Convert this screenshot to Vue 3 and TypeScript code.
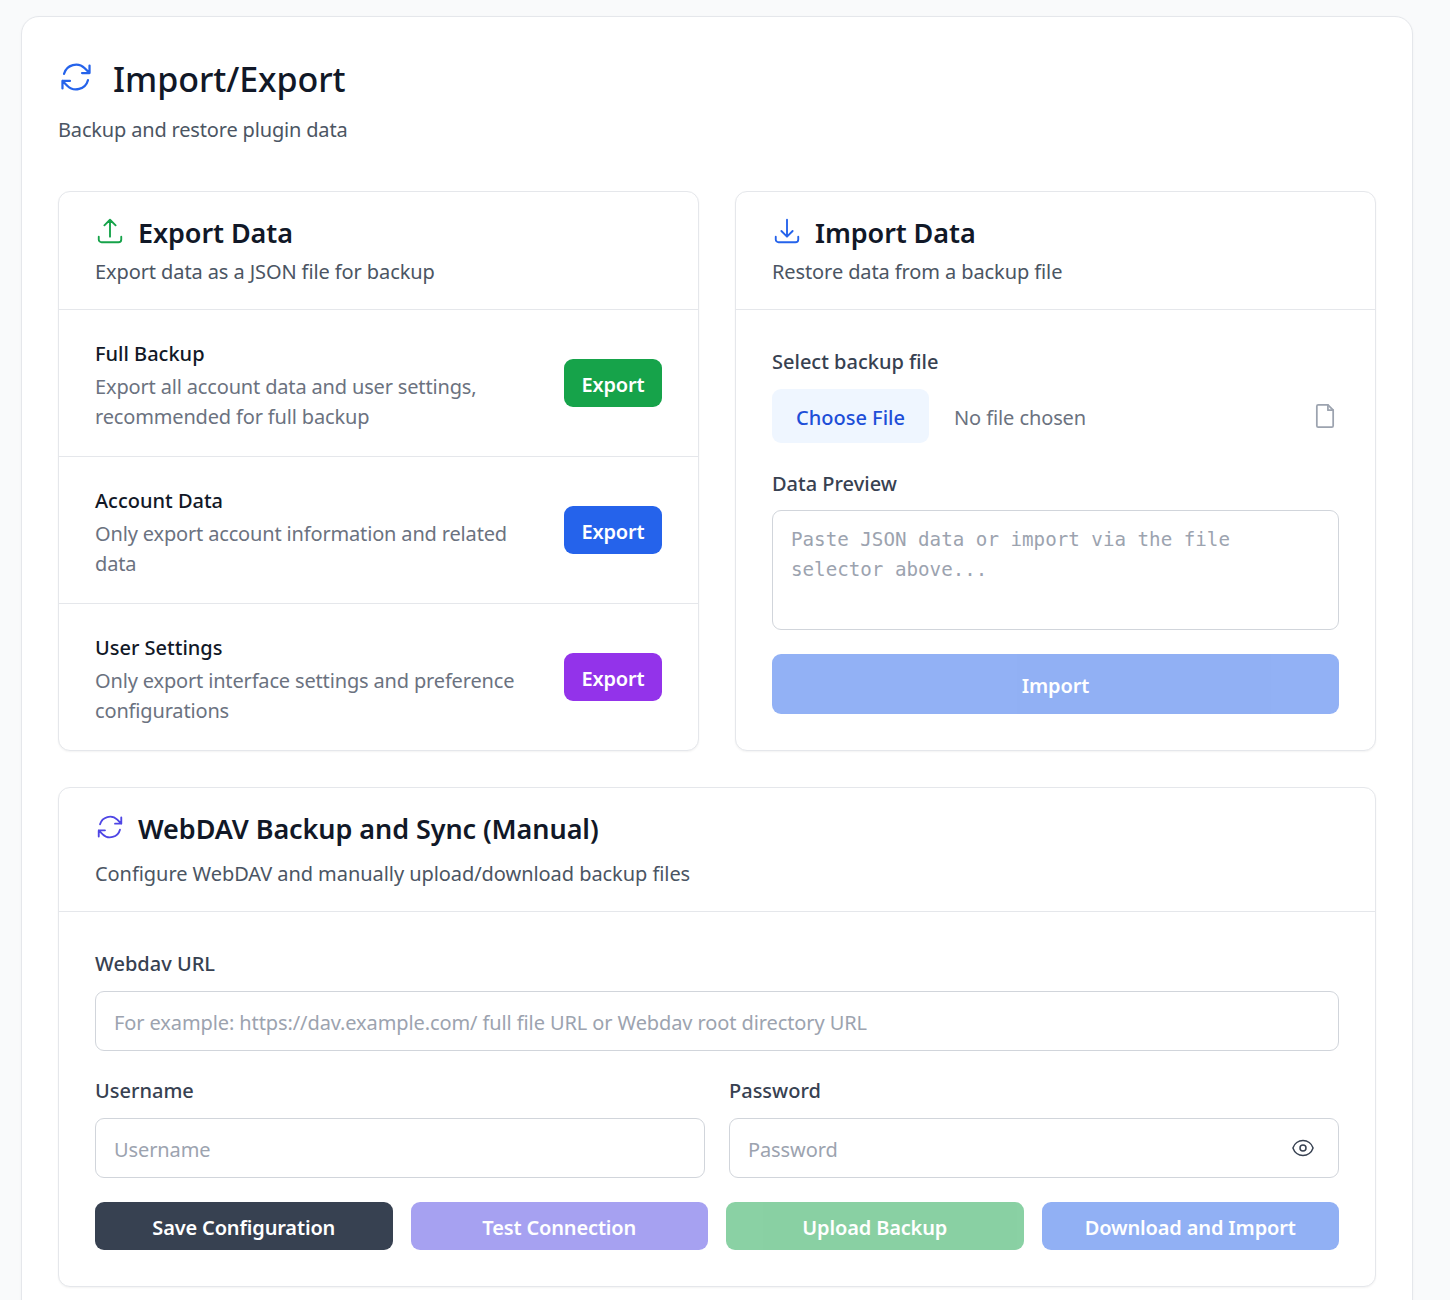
<template>
  <div class="page">
    <div class="shell">
      <header class="top">
        <div class="top-title">
          <svg class="icon-lg" viewBox="0 0 24 24" fill="none" stroke="#2563eb" stroke-width="1.5" stroke-linecap="round" stroke-linejoin="round">
            <path :d="syncPath" />
          </svg>
          <h1>Import/Export</h1>
        </div>
        <p class="muted">Backup and restore plugin data</p>
      </header>

      <div class="cols">
        <section class="card">
          <div class="card-head">
            <div class="head-title">
              <svg class="icon-md" viewBox="0 0 24 24" fill="none" stroke="#16a34a" stroke-width="1.5" stroke-linecap="round" stroke-linejoin="round">
                <path d="M3 16.5v2.25A2.25 2.25 0 005.25 21h13.5A2.25 2.25 0 0021 18.75V16.5m-13.5-9L12 3m0 0l4.5 4.5M12 3v13.5" />
              </svg>
              <h2>Export Data</h2>
            </div>
            <p class="muted head-desc">Export data as a JSON file for backup</p>
          </div>
          <div v-for="row in exportRows" :key="row.title" class="export-row">
            <div class="export-text">
              <h3>{{ row.title }}</h3>
              <p>{{ row.text }}</p>
            </div>
            <button class="btn export-btn" :class="row.color">Export</button>
          </div>
        </section>

        <section class="card">
          <div class="card-head">
            <div class="head-title">
              <svg class="icon-md" viewBox="0 0 24 24" fill="none" stroke="#2563eb" stroke-width="1.5" stroke-linecap="round" stroke-linejoin="round">
                <path d="M3 16.5v2.25A2.25 2.25 0 005.25 21h13.5A2.25 2.25 0 0021 18.75V16.5M16.5 12L12 16.5m0 0L7.5 12m4.5 4.5V3" />
              </svg>
              <h2>Import Data</h2>
            </div>
            <p class="muted head-desc">Restore data from a backup file</p>
          </div>
          <div class="import-body">
            <label class="field-label">Select backup file</label>
            <div class="file-row">
              <button class="choose">Choose File</button>
              <span class="no-file">No file chosen</span>
              <svg class="doc" viewBox="0 0 24 24" fill="none" stroke="#9ca3af" stroke-width="1.5" stroke-linecap="round" stroke-linejoin="round">
                <path d="M14.5 2.5H6.2c-.7 0-1.2.5-1.2 1.2v16.6c0 .7.5 1.2 1.2 1.2h11.6c.7 0 1.2-.5 1.2-1.2V7Z" />
                <path d="M14.5 2.5V7H19" />
              </svg>
            </div>
            <label class="field-label preview-label">Data Preview</label>
            <textarea class="preview" placeholder="Paste JSON data or import via the file selector above..."></textarea>
            <button class="btn import-btn">Import</button>
          </div>
        </section>
      </div>

      <section class="card webdav">
        <div class="card-head">
          <div class="head-title">
            <svg class="icon-md" viewBox="0 0 24 24" fill="none" stroke="#4f46e5" stroke-width="1.5" stroke-linecap="round" stroke-linejoin="round">
              <path :d="syncPath" />
            </svg>
            <h2>WebDAV Backup and Sync (Manual)</h2>
          </div>
          <p class="muted dav-desc">Configure WebDAV and manually upload/download backup files</p>
        </div>
        <div class="dav-body">
          <label class="field-label">Webdav URL</label>
          <input class="text-input" placeholder="For example: https://dav.example.com/ full file URL or Webdav root directory URL" />
          <div class="creds">
            <div>
              <label class="field-label">Username</label>
              <input class="text-input" placeholder="Username" />
            </div>
            <div>
              <label class="field-label">Password</label>
              <div class="pw-wrap">
                <input class="text-input" placeholder="Password" />
                <svg class="eye" viewBox="0 0 24 24" fill="none" stroke="#374151" stroke-width="1.5" stroke-linecap="round" stroke-linejoin="round">
                  <path d="M2.036 12.322a1.012 1.012 0 010-.639C3.423 7.51 7.36 4.5 12 4.5c4.638 0 8.573 3.007 9.963 7.178.07.207.07.431 0 .639C20.577 16.49 16.64 19.5 12 19.5c-4.638 0-8.573-3.007-9.963-7.178z" />
                  <path d="M15 12a3 3 0 11-6 0 3 3 0 016 0z" />
                </svg>
              </div>
            </div>
          </div>
          <div class="actions">
            <button v-for="a in actions" :key="a.label" class="btn action" :class="a.color">{{ a.label }}</button>
          </div>
        </div>
      </section>
    </div>
  </div>
</template>

<script setup lang="ts">
const syncPath =
  'M16.023 9.348h4.992v-.001M2.985 19.644v-4.992m0 0h4.992m-4.993 0l3.181 3.183a8.25 8.25 0 0013.803-3.7M4.031 9.865a8.25 8.25 0 0113.803-3.7l3.181 3.182m0-4.991v4.99'

const exportRows = [
  { title: 'Full Backup', text: 'Export all account data and user settings, recommended for full backup', color: 'green' },
  { title: 'Account Data', text: 'Only export account information and related data', color: 'blue' },
  { title: 'User Settings', text: 'Only export interface settings and preference configurations', color: 'purple' },
]

const actions = [
  { label: 'Save Configuration', color: 'slate' },
  { label: 'Test Connection', color: 'indigo-off' },
  { label: 'Upload Backup', color: 'green-off' },
  { label: 'Download and Import', color: 'blue-off' },
]
</script>

<style>
html,
body {
  margin: 0;
  background: #f9fafb;
  overflow: hidden;
}
</style>

<style scoped>
.page {
  height: 1300px;
  overflow: hidden;
  padding: 16px 37px 0 21px;
  box-sizing: border-box;
  font-family: "Noto Sans", "Open Sans", sans-serif;
  font-size: 20px;
  letter-spacing: -0.1px;
  line-height: 30px;
  color: #111827;
}

.shell {
  background: #fff;
  border: 1px solid #e5e7eb;
  border-radius: 18px;
  padding: 36px;
  box-shadow: 0 1px 3px rgba(0, 0, 0, 0.04);
}

.top-title {
  display: flex;
  align-items: center;
  gap: 19px;
  height: 54px;
}

h1 {
  margin: 0 0 2px;
  font-size: 34px;
  line-height: 52px;
  font-weight: 500;
  letter-spacing: -0.05px;
}

h2 {
  margin: 0;
  font-size: 27px;
  line-height: 40px;
  font-weight: 600;
  letter-spacing: -0.08px;
}

h3 {
  margin: 0;
  font-size: 20px;
  line-height: 30px;
  font-weight: 500;
  letter-spacing: 0;
}

p {
  margin: 0;
}

.muted {
  color: #4b5563;
}

.top .muted {
  margin-top: 8px;
  letter-spacing: -0.17px;
}

.cols {
  display: grid;
  grid-template-columns: 1fr 1fr;
  gap: 36px;
  margin-top: 46px;
}

.card {
  background: #fff;
  border: 1px solid #e5e7eb;
  border-radius: 12px;
  box-shadow: 0 1px 2px rgba(0, 0, 0, 0.05);
  overflow: hidden;
}

.card-head {
  padding: 21px 36px 22px;
  border-bottom: 1px solid #e5e7eb;
}

.head-desc {
  margin-top: 4px;
}

.head-title {
  display: flex;
  align-items: center;
  gap: 13px;
}

.icon-lg {
  width: 36px;
  height: 36px;
  flex: none;
  position: relative;
  top: -3px;
}

.icon-md {
  width: 30px;
  height: 30px;
  flex: none;
  position: relative;
  top: -2px;
}

.export-row {
  display: flex;
  align-items: center;
  gap: 36px;
  padding: 0 36px;
  height: 147px;
  box-sizing: border-box;
  border-bottom: 1px solid #e5e7eb;
}

.export-row:last-child {
  height: 146px;
  border-bottom: none;
}

.export-text {
  flex: 1;
  padding-top: 4px;
}

.export-text p {
  margin-top: 3px;
  letter-spacing: -0.16px;
  color: #6b7280;
}

.btn {
  border: none;
  border-radius: 9px;
  color: #fff;
  font-family: inherit;
  font-size: 20px;
  font-weight: 600;
  letter-spacing: -0.15px;
  line-height: 30px;
  padding: 3px 0 0;
}

.export-btn {
  width: 98px;
  height: 48px;
  flex: none;
}

.green { background: #16a34a; }
.blue { background: #2563eb; }
.purple { background: #9333ea; }
.slate { background: #374151; }
.indigo-off { background: #4f46e5; opacity: 0.5; }
.green-off { background: #16a34a; opacity: 0.5; }
.blue-off { background: #2563eb; opacity: 0.5; }

.import-body {
  padding: 37px 36px 36px;
}

.field-label {
  display: block;
  font-size: 20px;
  line-height: 30px;
  font-weight: 500;
  letter-spacing: 0;
  color: #374151;
}

.file-row {
  display: flex;
  align-items: center;
  margin-top: 12px;
  height: 54px;
}

.choose {
  width: 157px;
  height: 54px;
  border: none;
  border-radius: 9px;
  background: #eff6ff;
  color: #1d4ed8;
  font-family: inherit;
  font-size: 20px;
  font-weight: 500;
  padding: 3px 0 0;
}

.no-file {
  margin-left: 25px;
  padding-top: 3px;
  color: #6b7280;
}

.doc {
  width: 28px;
  height: 28px;
  margin-left: auto;
}

.preview-label {
  margin-top: 26px;
}

.preview {
  display: block;
  width: 100%;
  height: 120px;
  margin-top: 11px;
  box-sizing: border-box;
  border: 1px solid #d1d5db;
  border-radius: 9px;
  padding: 14px 18px;
  font-family: "DejaVu Sans Mono", monospace;
  font-size: 19.2px;
  line-height: 30px;
  resize: none;
  outline: none;
}

.preview::placeholder,
.text-input::placeholder {
  color: #9ca3af;
  opacity: 1;
}

.import-btn {
  display: block;
  width: 100%;
  height: 60px;
  margin-top: 24px;
  background: #2563eb;
  opacity: 0.5;
}

.webdav {
  margin-top: 36px;
}

.dav-desc {
  margin-top: 10px;
  letter-spacing: -0.06px;
}

.dav-body {
  padding: 37px 36px 36px;
}

.text-input {
  display: block;
  width: 100%;
  height: 60px;
  margin-top: 12px;
  box-sizing: border-box;
  border: 1px solid #d1d5db;
  border-radius: 9px;
  padding: 2px 18px 0;
  font-family: inherit;
  font-size: 20px;
  letter-spacing: -0.1px;
  color: #111827;
  background: #fff;
  outline: none;
}

.creds {
  display: grid;
  grid-template-columns: 1fr 1fr;
  gap: 24px;
  margin-top: 25px;
}

.pw-wrap {
  position: relative;
}

.eye {
  position: absolute;
  right: 24px;
  top: 18px;
  width: 24px;
  height: 24px;
}

.actions {
  display: grid;
  grid-template-columns: repeat(4, 1fr);
  gap: 18px;
  margin-top: 24px;
}

.action {
  height: 48px;
}
</style>
